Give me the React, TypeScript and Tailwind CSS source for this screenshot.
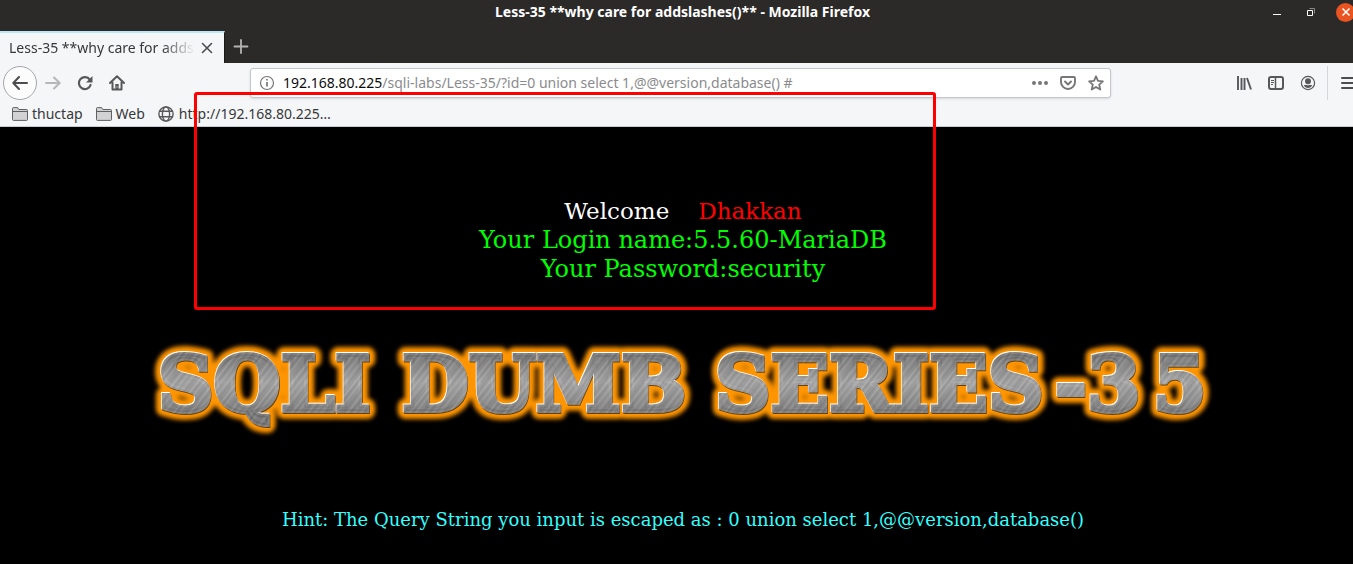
import React from 'react';

const stroke = {
  fill: 'none',
  stroke: 'currentColor',
  strokeWidth: 2,
  strokeLinecap: 'round' as const,
  strokeLinejoin: 'round' as const,
};

function Icon({ size = 16, children }: { size?: number; children: React.ReactNode }) {
  return (
    <svg width={size} height={size} viewBox="0 0 16 16" className="block shrink-0" aria-hidden="true">
      {children}
    </svg>
  );
}

function IconButton({ label, children, className = '' }: { label: string; children: React.ReactNode; className?: string }) {
  return (
    <button type="button" aria-label={label} className={`flex h-8 w-8 shrink-0 items-center justify-center text-[#58585b] ${className}`}>
      {children}
    </button>
  );
}

function FolderIcon() {
  return (
    <Icon>
      <path d="M.5 13.5v-11q0-.9.9-.9h4.2l1.2 1.9h7.8q.9 0 .9.9v9.100q0 .9-.9.9H1.400q-.9 0-.9-.9z" fill="#d2d2d4" stroke="#606063" />
      <path d="M.8 5.5h14.4" stroke="#606063" />
    </Icon>
  );
}

function GlobeIcon() {
  return (
    <Icon>
      <g fill="none" stroke="#58585b" strokeWidth="1.4">
        <circle cx="8" cy="8" r="7.1" />
        <ellipse cx="8" cy="8" rx="3.6" ry="7.1" />
        <path d="M1.5 5.2h13M1.5 10.8h13" />
      </g>
    </Icon>
  );
}

function WindowBar() {
  return (
    <header className="relative flex h-[30px] items-center justify-end bg-[#2c2929]">
      <h1 className="absolute inset-x-0 top-0 pl-3 text-center text-[14px] leading-6 font-bold text-white">
        Less-35 **why care for addslashes()** - Mozilla Firefox
      </h1>
      <div className="relative -mr-0.5 -mt-1.5 flex items-center gap-[17px]">
        <button type="button" aria-label="Minimize" className="flex h-5 w-4 items-center justify-center">
          <Icon><path d="M3 10.500h8" stroke="#fff" /></Icon>
        </button>
        <button type="button" aria-label="Restore" className="flex h-5 w-4 items-center justify-center">
          <Icon>
            <path d="M6.500 4.500h5v5" fill="none" stroke="#8b8989" />
            <path d="M4.500 6.500h5v5h-5z" fill="none" stroke="#fff" />
          </Icon>
        </button>
        <button type="button" aria-label="Close window" className="flex h-[19px] w-[19px] items-center justify-center rounded-full bg-[#e95420]">
          <Icon><path d="m4.500 4.500 7 7m0-7-7 7" stroke="#fff" strokeWidth="1.5" /></Icon>
        </button>
      </div>
    </header>
  );
}

function TabStrip() {
  return (
    <div className="flex h-[33px] items-end bg-[#2c2929]">
      <div className="flex h-8 w-[225px] items-center border-t-2 border-r border-t-[#bce7f8] border-r-[#1a1818] bg-[#f5f6f7] pl-[9px]">
        <span className="w-[186px] overflow-hidden text-[14px] leading-6 whitespace-nowrap [mask-image:linear-gradient(to_right,black_82%,transparent)]">
          Less-35 **why care for addslashes()**
        </span>
        <button type="button" aria-label="Close tab" className="flex w-6 shrink-0 justify-center text-[#4d4d50]">
          <Icon><path d="m3.500 3.500 9 9m0-9-9 9" {...stroke} strokeWidth="1.6" /></Icon>
        </button>
      </div>
      <button type="button" aria-label="New tab" className="flex h-8 w-8 items-center justify-center text-[#b5b4b4]">
        <Icon><path d="M8 1v13M1.500 7.500h13" {...stroke} strokeWidth="1.8" /></Icon>
      </button>
    </div>
  );
}

function NavBar() {
  return (
    <nav aria-label="Navigation" className="flex h-10 items-center overflow-hidden bg-[#f5f6f8] pl-[3px]">
      <button type="button" aria-label="Back" className="flex h-[34px] w-[34px] shrink-0 items-center justify-center rounded-full border border-[#a6a6a8] bg-[#fcfcfc] text-[#4d4d50]">
        <Icon><path d="M15 8H1.5M7 2 1.300 8 7 14" {...stroke} /></Icon>
      </button>
      <IconButton label="Forward" className="text-[#b6b7b8]!">
        <Icon><path d="M1 8h13.500M9 2.500 14.700 8 9 13.500" {...stroke} /></Icon>
      </IconButton>
      <IconButton label="Reload">
        <Icon>
          <path d="M13.600 10a6 6 0 1 1-.8-5.400" {...stroke} strokeWidth="2.200" />
          <path d="M15.500 1v6.500H9z" fill="currentColor" />
        </Icon>
      </IconButton>
      <IconButton label="Home">
        <Icon>
          <path d="m1 8 7-6.700L15 8M3.500 7.500v7h9v-7" {...stroke} />
          <path d="M6.300 14.500V9h3.400v5.500z" fill="currentColor" />
          <path d="M8 11.500v1" stroke="#f5f6f8" />
        </Icon>
      </IconButton>
      <div className="mr-[117px] ml-[117px] flex h-[30px] min-w-0 flex-1 items-center rounded-[3px] border border-[#c3c6cc] bg-white pr-[6px] pl-2 shadow-sm">
        <span className="text-[#77777a]">
          <Icon>
            <circle cx="8" cy="8" r="6.500" fill="none" stroke="currentColor" strokeWidth="1.200" />
            <path d="M8 7v4.500M8 4v1.600" stroke="currentColor" strokeWidth="1.700" />
          </Icon>
        </span>
        <label htmlFor="address" className="pl-2 text-[14px] leading-6 text-[#0c0c0d]">192.168.80.225</label>
        <input
          id="address"
          className="min-w-0 flex-1 bg-transparent text-[14px] leading-6 text-[#8b8b8d] outline-none"
          defaultValue="/sqli-labs/Less-35/?id=0 union select 1,@@version,database() #"
        />
        <div className="flex items-center gap-3 text-[#77777a]">
          <button type="button" aria-label="Page actions">
            <Icon><g fill="currentColor"><circle cx="2" cy="8" r="2" /><circle cx="8" cy="8" r="2" /><circle cx="14" cy="8" r="2" /></g></Icon>
          </button>
          <button type="button" aria-label="Save to Pocket">
            <Icon><path d="M2.200 2h11.600q1.200 0 1.200 1.200V7a7 7 0 0 1-14 0V3.200Q1 2 2.200 2zM5 6.500l3 3 3-3" {...stroke} strokeWidth="1.900" /></Icon>
          </button>
          <button type="button" aria-label="Bookmark this page">
            <Icon><path d="m8 1.300 2 4.500 4.900.5-3.700 3.300 1.100 4.900L8 12l-4.300 2.500 1.100-4.900L1.100 6.300 6 5.800z" {...stroke} strokeWidth="1.800" /></Icon>
          </button>
        </div>
      </div>
      <IconButton label="Library">
        <Icon><path d="M2 1v14M5.500 3v12M8.500 3v12M11 3l4 11.500" fill="none" stroke="currentColor" strokeWidth="1.900" /></Icon>
      </IconButton>
      <IconButton label="Sidebars">
        <Icon>
          <rect x="1" y="2" width="14" height="12" rx="2" {...stroke} />
          <path d="M7.500 2v12" stroke="currentColor" strokeWidth="1.500" />
          <path d="M3 5.500h3M3 7.500h3M3 9.500h2" stroke="currentColor" />
        </Icon>
      </IconButton>
      <IconButton label="Account">
        <Icon>
          <circle cx="8" cy="8" r="6.600" fill="none" stroke="currentColor" strokeWidth="1.200" />
          <circle cx="8" cy="6.300" r="3" fill="currentColor" />
          <path d="M3.700 10q1.800.2 2.500-.3 1.800 1 3.600 0 .7.500 2.500.3-1.400 3-4.300 3T3.700 10z" fill="currentColor" />
        </Icon>
      </IconButton>
      <div className="ml-[3px] flex h-[34px] w-[26px] shrink-0 items-center border-l border-[#d5d6d9] pl-[12px] text-[#4d4d50]">
        <button type="button" aria-label="Open menu">
          <Icon><path d="M2 3h14M2 8h14M2 13h14" {...stroke} /></Icon>
        </button>
      </div>
    </nav>
  );
}

function Bookmarks() {
  return (
    <div className="flex h-6 items-start gap-[13px] border-b border-[#c5cdd0] bg-[#f5f6f8] pl-3 text-[14px] leading-[22px] text-[#38383a]">
      <a href="#thuctap" className="flex items-center gap-1"><FolderIcon />thuctap</a>
      <a href="#web" className="flex items-center gap-1"><FolderIcon />Web</a>
      <a href="#site" className="flex items-center gap-[5px]"><GlobeIcon />http://192.168.80.225…</a>
    </div>
  );
}

const words = [
  { text: 'SQLI', x: 15 },
  { text: 'DUMB', x: 259 },
  { text: 'SERIES', x: 572 },
  { text: '-3', x: 912 },
  { text: '5', x: 1010 },
];

function Words() {
  return (
    <>
      {words.map((word) => (
        <text key={word.text} x={word.x} y="75">{word.text}</text>
      ))}
    </>
  );
}

function Banner() {
  return (
    <svg viewBox="0 0 1080 110" width="1080" height="110" className="block max-w-full font-['DejaVu_Serif',serif] text-[77px] font-bold" role="img" aria-label="SQLI DUMB SERIES-35">
      <defs>
        <pattern id="brushed" width="31" height="200" patternUnits="userSpaceOnUse" patternTransform="rotate(38)">
          <rect width="31" height="200" fill="#949494" />
          <path d="M2 0v200M9.500 0v200M14 0v200M22.500 0v200M28 0v200" stroke="#a8a8a8" strokeWidth="1" />
          <path d="M5 0v200M12 0v200M19.300 0v200M25 0v200" stroke="#838383" strokeWidth="1.100" />
          <path d="M7.300 0v200M17 0v200M30 0v200" stroke="#8b8b8b" strokeWidth=".7" />
        </pattern>
        <linearGradient id="shade" x1="0" y1="0" x2="0" y2="110" gradientUnits="userSpaceOnUse">
          <stop offset=".2" stopColor="#000" stopOpacity=".12" />
          <stop offset=".42" stopColor="#fff" stopOpacity=".12" />
          <stop offset=".72" stopColor="#000" stopOpacity=".14" />
        </linearGradient>
        <filter id="glow" x="-5%" y="-30%" width="110%" height="160%">
          <feGaussianBlur stdDeviation="2" />
        </filter>
      </defs>
      <g fill="#ff9500" stroke="#ff9500" strokeWidth="16" strokeLinejoin="round" filter="url(#glow)"><Words /></g>
      <g fill="#674314" stroke="#674314" strokeWidth="4" transform="translate(.6 .6)"><Words /></g>
      <g fill="#fff" stroke="#fff" strokeWidth="4" transform="translate(-.7 -.7)"><Words /></g>
      <g fill="url(#brushed)" stroke="url(#brushed)" strokeWidth="4"><Words /></g>
      <g fill="url(#shade)" stroke="url(#shade)" strokeWidth="4"><Words /></g>
    </svg>
  );
}

export default function App() {
  return (
    <div className="relative flex min-h-screen flex-col overflow-hidden bg-black font-['Noto_Sans',sans-serif] text-[#38383a]">
      <WindowBar />
      <TabStrip />
      <NavBar />
      <Bookmarks />
      <main className="flex flex-1 flex-col items-center pt-[70px] pl-[13px] text-center font-['DejaVu_Serif',serif]">
        <div className="text-[23px] leading-7 text-white">
          Welcome<span className="ml-[29px] text-[#f00]">Dhakkan</span>
        </div>
        <div className="mt-px text-[24px] leading-[29px] text-[#0f0]">
          <p>Your Login name:5.5.60-MariaDB</p>
          <p>Your Password:security</p>
        </div>
        <div className="mt-[52px]"><Banner /></div>
        <p className="mt-[62px] text-[18px] leading-6 text-[#3ff]">
          Hint: The Query String you input is escaped as : 0 union select 1,@@version,database()
        </p>
      </main>
      <div className="pointer-events-none absolute top-[92px] left-[194px] h-[218px] w-[742px] rounded-[3px] border-3 border-[#f00]" />
    </div>
  );
}
